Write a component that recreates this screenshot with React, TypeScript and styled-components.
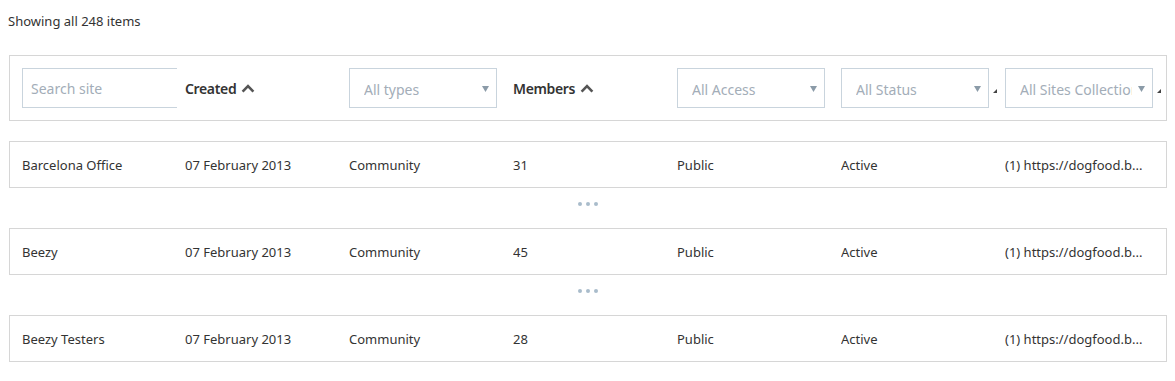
import React from 'react'
import styled, { createGlobalStyle } from 'styled-components'

const GlobalStyle = createGlobalStyle`
  body {
    margin: 0;
    background: #ffffff;
    font-family: "Segoe UI", "Noto Sans", "Open Sans", sans-serif;
    color: #333333;
  }
`

const COL = 164

const Page = styled.div`
  padding: 12px 8px 20px 9px;
`

const Summary = styled.div`
  font-size: 13px;
  line-height: 18px;
  margin-left: -1px;
  margin-bottom: 25px;
  color: #333;
`

const FilterBar = styled.div`
  display: grid;
  grid-template-columns: repeat(7, ${COL}px);
  align-items: center;
  border: 1px solid #d6d6d6;
  padding: 12px 0 12px 11px;
  margin-bottom: 20px;
  overflow: hidden;
`

const SearchInput = styled.div`
  box-sizing: border-box;
  width: 155px;
  height: 40px;
  margin-left: 1px;
  border: 1px solid #c9d4dd;
  border-right: none;
  padding: 1px 0 0 8px;
  display: flex;
  align-items: center;
  font-size: 14px;
  color: #a3adb8;
`

const SortHeader = styled.div`
  display: flex;
  align-items: center;
  gap: 5px;
  font-size: 14px;
  font-weight: 600;
  color: #333;
  letter-spacing: -0.35px;
`

const SelectWrap = styled.div`
  display: flex;
  align-items: center;
  gap: 4px;
`

const Select = styled.div`
  box-sizing: border-box;
  width: 148px;
  height: 40px;
  border: 1px solid #c9d4dd;
  padding: 2px 7px 0 14px;
  display: flex;
  align-items: center;
  justify-content: space-between;
  gap: 6px;
  font-size: 14px;
  color: #a3adb8;
  white-space: nowrap;
  overflow: hidden;
`

const SelectLabel = styled.span`
  overflow: hidden;
  text-overflow: clip;
  flex: 1;
  min-width: 0;
`

const GripMark = styled.span`
  display: flex;
  margin-top: 6px;
`

const Row = styled.div`
  display: grid;
  grid-template-columns: repeat(7, ${COL}px);
  align-items: center;
  height: 45px;
  border: 1px solid #d6d6d6;
  padding-left: 11px;
  font-size: 13px;
  color: #333;
  overflow: hidden;
  white-space: nowrap;
`

const Cell = styled.div`
  overflow: hidden;
  text-overflow: ellipsis;

  &:first-child {
    padding-left: 1px;
  }
`

const Separator = styled.div`
  height: 40px;
  display: flex;
  justify-content: center;
  gap: 4px;
  padding-top: 14px;
  box-sizing: border-box;
`

const Dot = styled.span`
  width: 4px;
  height: 4px;
  border-radius: 50%;
  background: #a9bccb;
`

const Chevron = () => (
  <svg width="14" height="9" viewBox="0 0 14 9">
    <path d="M1.6 7.6 L7 2.2 L12.4 7.6" fill="none" stroke="#555" strokeWidth="2.6" />
  </svg>
)

const Caret = () => (
  <svg width="7" height="6" viewBox="0 0 7 6">
    <path d="M0 0 H7 L3.5 6 Z" fill="#8b9ba8" />
  </svg>
)

const Grip = () => (
  <GripMark>
    <svg width="4" height="4" viewBox="0 0 4 4">
      <path d="M4 0 V4 H0 Z" fill="#444" />
    </svg>
  </GripMark>
)

type SelectProps = { label: string; grip?: boolean }

const FilterSelect = ({ label, grip }: SelectProps) => (
  <SelectWrap>
    <Select>
      <SelectLabel>{label}</SelectLabel>
      <Caret />
    </Select>
    {grip && <Grip />}
  </SelectWrap>
)

const sites = [
  { name: 'Barcelona Office', members: 31 },
  { name: 'Beezy', members: 45 },
  { name: 'Beezy Testers', members: 28 },
]

const App = () => (
  <>
    <GlobalStyle />
    <Page>
      <Summary>Showing all 248 items</Summary>

      <FilterBar>
        <SearchInput>Search site</SearchInput>
        <SortHeader>Created <Chevron /></SortHeader>
        <FilterSelect label="All types" />
        <SortHeader>Members <Chevron /></SortHeader>
        <FilterSelect label="All Access" />
        <FilterSelect label="All Status" grip />
        <FilterSelect label="All Sites Collection" grip />
      </FilterBar>

      {sites.map((site, i) => (
        <React.Fragment key={site.name}>
          <Row>
            <Cell>{site.name}</Cell>
            <Cell>07 February 2013</Cell>
            <Cell>Community</Cell>
            <Cell>{site.members}</Cell>
            <Cell>Public</Cell>
            <Cell>Active</Cell>
            <Cell>(1) https://dogfood.b...</Cell>
          </Row>
          {i < sites.length - 1 && (
            <Separator>
              <Dot />
              <Dot />
              <Dot />
            </Separator>
          )}
        </React.Fragment>
      ))}
    </Page>
  </>
)

export default App
